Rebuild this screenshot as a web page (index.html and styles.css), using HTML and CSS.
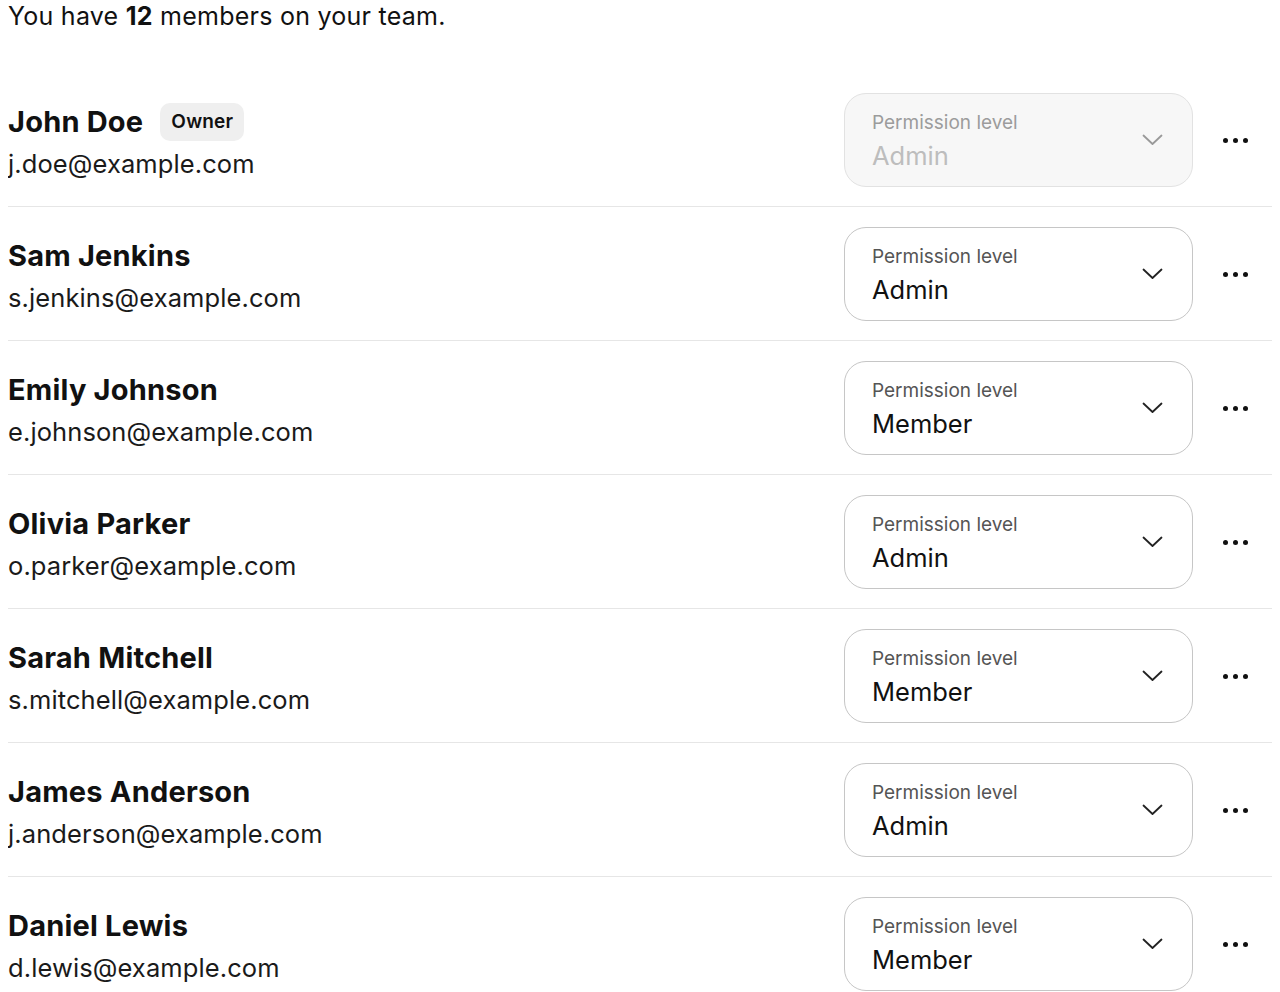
FILE: index.html
```html
<!DOCTYPE html>
<html lang="en">
<head>
  <meta charset="UTF-8" />
  <title>Team members</title>
  <link rel="stylesheet" href="styles.css">
</head>
<body>
  <p class="summary">You have <b>12</b> members on your team.</p>

  <div class="members">
    <div class="member">
      <div class="info">
        <div class="name">John Doe <span class="badge">Owner</span></div>
        <div class="email">j.doe@example.com</div>
      </div>
      <div class="select disabled">
        <div class="select-text">
          <span class="label">Permission level</span>
          <span class="value">Admin</span>
        </div>
        <svg class="chevron" width="21" height="12" viewBox="0 0 21 12"><path d="M1.5 1.5 L10.5 10 L19.5 1.5" /></svg>
      </div>
      <div class="more"><span></span><span></span><span></span></div>
    </div>

    <div class="member">
      <div class="info">
        <div class="name">Sam Jenkins</div>
        <div class="email">s.jenkins@example.com</div>
      </div>
      <div class="select">
        <div class="select-text">
          <span class="label">Permission level</span>
          <span class="value">Admin</span>
        </div>
        <svg class="chevron" width="21" height="12" viewBox="0 0 21 12"><path d="M1.5 1.5 L10.5 10 L19.5 1.5" /></svg>
      </div>
      <div class="more"><span></span><span></span><span></span></div>
    </div>

    <div class="member">
      <div class="info">
        <div class="name">Emily Johnson</div>
        <div class="email">e.johnson@example.com</div>
      </div>
      <div class="select">
        <div class="select-text">
          <span class="label">Permission level</span>
          <span class="value">Member</span>
        </div>
        <svg class="chevron" width="21" height="12" viewBox="0 0 21 12"><path d="M1.5 1.5 L10.5 10 L19.5 1.5" /></svg>
      </div>
      <div class="more"><span></span><span></span><span></span></div>
    </div>

    <div class="member">
      <div class="info">
        <div class="name">Olivia Parker</div>
        <div class="email">o.parker@example.com</div>
      </div>
      <div class="select">
        <div class="select-text">
          <span class="label">Permission level</span>
          <span class="value">Admin</span>
        </div>
        <svg class="chevron" width="21" height="12" viewBox="0 0 21 12"><path d="M1.5 1.5 L10.5 10 L19.5 1.5" /></svg>
      </div>
      <div class="more"><span></span><span></span><span></span></div>
    </div>

    <div class="member">
      <div class="info">
        <div class="name">Sarah Mitchell</div>
        <div class="email">s.mitchell@example.com</div>
      </div>
      <div class="select">
        <div class="select-text">
          <span class="label">Permission level</span>
          <span class="value">Member</span>
        </div>
        <svg class="chevron" width="21" height="12" viewBox="0 0 21 12"><path d="M1.5 1.5 L10.5 10 L19.5 1.5" /></svg>
      </div>
      <div class="more"><span></span><span></span><span></span></div>
    </div>

    <div class="member">
      <div class="info">
        <div class="name">James Anderson</div>
        <div class="email">j.anderson@example.com</div>
      </div>
      <div class="select">
        <div class="select-text">
          <span class="label">Permission level</span>
          <span class="value">Admin</span>
        </div>
        <svg class="chevron" width="21" height="12" viewBox="0 0 21 12"><path d="M1.5 1.5 L10.5 10 L19.5 1.5" /></svg>
      </div>
      <div class="more"><span></span><span></span><span></span></div>
    </div>

    <div class="member">
      <div class="info">
        <div class="name">Daniel Lewis</div>
        <div class="email">d.lewis@example.com</div>
      </div>
      <div class="select">
        <div class="select-text">
          <span class="label">Permission level</span>
          <span class="value">Member</span>
        </div>
        <svg class="chevron" width="21" height="12" viewBox="0 0 21 12"><path d="M1.5 1.5 L10.5 10 L19.5 1.5" /></svg>
      </div>
      <div class="more"><span></span><span></span><span></span></div>
    </div>
  </div>
</body>
</html>
```

FILE: styles.css
```css
body {
  margin: 0 8px;
  font-family: Inter, 'Noto Sans', sans-serif;
  color: #111;
  background: #fff;
}
.summary {
  margin: 0;
  font-size: 25px;
  line-height: 32px;
  letter-spacing: 0.25px;
}
.summary b {
  font-weight: 700;
}
.members {
  margin-top: 41px;
}
.member {
  display: flex;
  align-items: center;
  padding: 20px 0 19px;
  border-bottom: 1px solid #e6e6e6;
}
.info {
  flex: 1;
  margin-top: 4px;
}
.name {
  display: flex;
  align-items: center;
  font-size: 29px;
  font-weight: 700;
  line-height: 40px;
  letter-spacing: 0.2px;
}
.badge {
  margin-left: 17px;
  padding: 0 11px;
  height: 38px;
  line-height: 38px;
  background: #efefef;
  border-radius: 10px;
  font-size: 19px;
  font-weight: 600;
  letter-spacing: 0.2px;
}
.email {
  margin-top: 4px;
  font-size: 25.5px;
  line-height: 36px;
  letter-spacing: 0.1px;
  color: #1a1a1a;
}
.select {
  box-sizing: border-box;
  width: 349px;
  height: 94px;
  display: flex;
  align-items: center;
  padding: 0 29px 0 27px;
  border: 1.5px solid #c6c6c6;
  border-radius: 22px;
}
.select-text {
  flex: 1;
  display: flex;
  flex-direction: column;
  padding-top: 4px;
}
.label {
  font-size: 19px;
  line-height: 26px;
  color: #555;
}
.value {
  margin-top: 2px;
  font-size: 25.5px;
  line-height: 36px;
  color: #111;
}
.chevron path {
  fill: none;
  stroke: #222;
  stroke-width: 1.8;
  stroke-linecap: round;
  stroke-linejoin: round;
}
.disabled {
  background: #f7f7f7;
  border-color: #e2e2e2;
}
.disabled .label {
  color: #9c9c9c;
}
.disabled .value {
  color: #bdbdbd;
}
.disabled .chevron path {
  stroke: #999;
}
.more {
  width: 79px;
  display: flex;
  justify-content: center;
  gap: 5px;
  padding-left: 5px;
  box-sizing: border-box;
}
.more span {
  width: 5px;
  height: 5px;
  border-radius: 50%;
  background: #111;
}
```
